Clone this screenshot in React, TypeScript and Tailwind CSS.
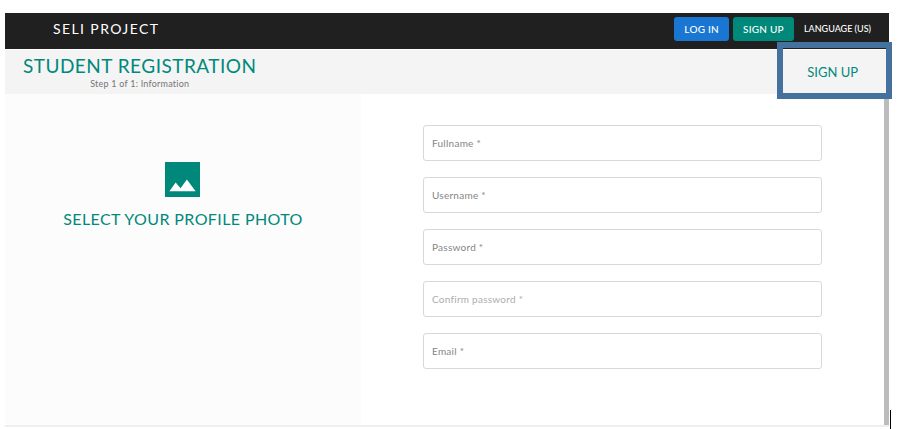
type Field = { id: string; label: string; type: string; muted?: boolean };

const fields: Field[] = [
  { id: "fullname", label: "Fullname *", type: "text" },
  { id: "username", label: "Username *", type: "text" },
  { id: "password", label: "Password *", type: "password" },
  { id: "confirm", label: "Confirm password *", type: "password", muted: true },
  { id: "email", label: "Email *", type: "email" },
];

function TopBar() {
  return (
    <header className="flex h-9 items-center justify-between bg-[#202020] pr-[18px] pb-1 pl-12 text-white">
      <span className="text-sm leading-4 tracking-widest">SELI PROJECT</span>
      <nav className="flex items-center gap-1">
        <button className="h-6 rounded-[3px] bg-[#1976d2] px-[10px] text-[10px] font-medium tracking-wide">LOG IN</button>
        <button className="h-6 rounded-[3px] bg-[#00897b] px-[10px] text-[10px] font-medium tracking-wide">SIGN UP</button>
        <button className="ml-1.5 h-6 text-[9px] font-medium">LANGUAGE (US)</button>
      </nav>
    </header>
  );
}

function TitleBar() {
  return (
    <div className="relative mt-px flex h-11 items-center justify-between bg-[#f4f4f4] pr-[31px] pl-[18px]">
      <div className="text-center">
        <h1 className="text-[19px] leading-6 tracking-wide text-[#00897b]">STUDENT REGISTRATION</h1>
        <p className="text-[9px] leading-3 tracking-wide text-[#757575]">Step 1 of 1: Information</p>
      </div>
      <button className="text-[13px] leading-4 text-[#00897b]">SIGN UP</button>
      <div className="pointer-events-none absolute -top-2 -right-[3px] h-[57px] w-[115px] border-6 border-[#44719d]" />
    </div>
  );
}

function PhotoPicker() {
  return (
    <section className="flex w-[356px] shrink-0 justify-center bg-[#fcfcfc] pt-[68px]">
      <button className="flex flex-col items-center self-start text-[#00897b]">
        <svg className="h-[35px] w-[35px]" viewBox="0 0 36 36" aria-hidden="true">
          <rect width="36" height="36" fill="#00897b" />
          <path d="M4.500 30L11 21L16 27L22.500 18L31.500 30Z" fill="#fff" />
        </svg>
        <span className="mt-3 text-base leading-5 tracking-wide">SELECT YOUR PROFILE PHOTO</span>
      </button>
    </section>
  );
}

function InfoForm() {
  return (
    <form className="flex min-w-0 flex-1 flex-col gap-4 border-r-[5px] border-[#bcbcbc] px-[62px] pt-[31px] pb-14">
      {fields.map((f) => (
        <div key={f.id} className="flex h-9 items-center rounded-[3px] border border-[#d8d8d8] px-2">
          <label htmlFor={f.id} className={"text-[10px] leading-4 tracking-wide " + (f.muted ? "text-[#adadad]" : "text-[#858585]")}>
            {f.label}
          </label>
          <input id={f.id} type={f.type} className="h-full min-w-0 flex-1 pl-2 text-[10px] outline-none" />
        </div>
      ))}
    </form>
  );
}

export default function App() {
  return (
    <div className="flex items-end bg-white pt-[13px] pl-[5px] font-['Lato',sans-serif]">
      <main className="mb-0.5 min-w-0 flex-1 border-b-2 border-[#efefef]">
        <TopBar />
        <TitleBar />
        <div className="flex">
          <PhotoPicker />
          <InfoForm />
        </div>
      </main>
      <div className="mr-[7px] ml-px h-[19px] w-px bg-black" />
    </div>
  );
}
